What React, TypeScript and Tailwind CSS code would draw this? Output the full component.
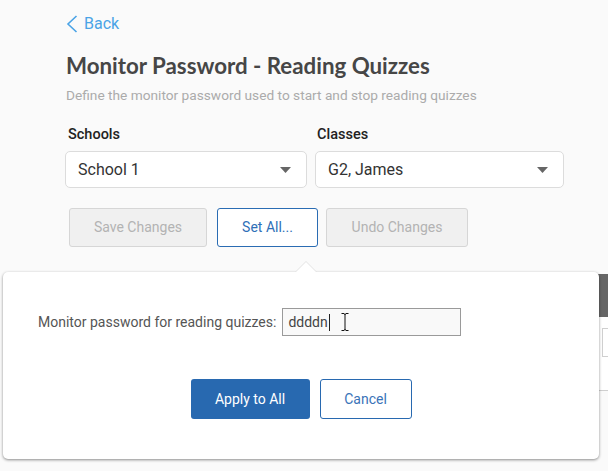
function BackChevron() {
  return (
    <svg width="12" height="18" viewBox="0 0 12 18" className="shrink-0">
      <path d="M10.5 1 L2 9 L10.5 17" stroke="#4aa3e6" strokeWidth="1.6" fill="none" />
    </svg>
  )
}

function Caret() {
  return (
    <svg width="11" height="6" viewBox="0 0 11 6" className="shrink-0">
      <path d="M0 0 L11 0 L5.5 6 Z" fill="#666" />
    </svg>
  )
}

function Select({ value, className }: { value: string; className: string }) {
  return (
    <div
      className={`flex h-[37px] items-center justify-between rounded-[5px] border border-[#dcdcdc] bg-white pl-[12px] pr-[15px] text-[16px] text-[#333] ${className}`}
    >
      <span>{value}</span>
      <Caret />
    </div>
  )
}

function IBeam() {
  return (
    <svg width="8" height="18" viewBox="0 0 8 18" className="absolute left-[58px] top-[4px]">
      <path d="M0.5 0.5 H3 M5 0.5 H7.5 M3 0.5 Q4 1 4 2 V16 Q4 17 3 17.5 M5 0.5 Q4 1 4 2 M4 16 Q4 17 5 17.5 M0.5 17.5 H3 M5 17.5 H7.5" stroke="#111" strokeWidth="1" fill="none" />
    </svg>
  )
}

export default function App() {
  return (
    <div className="relative h-[471px] w-[608px] overflow-hidden bg-[#fafafa] font-['Roboto',sans-serif]">
      <div className="pl-[66px] pt-[13px]">
        {/* Back link */}
        <div className="flex h-[22px] items-center gap-[6px] text-[16px] text-[#4aa3e6]">
          <BackChevron />
          <span>Back</span>
        </div>

        <h1 className="mt-[17px] font-['Lato',sans-serif] text-[22.3px] font-bold leading-[28px] text-[#464646]">
          Monitor Password - Reading Quizzes
        </h1>
        <p className="mt-[6px] text-[13.7px] leading-[18px] text-[#ababab]">
          Define the monitor password used to start and stop reading quizzes
        </p>

        {/* Filters */}
        <div className="-ml-px mt-[22px] flex gap-[8px]">
          <div className="w-[242px]">
            <div className="pl-[3px] text-[14.5px] font-medium leading-[18px] text-[#222]">Schools</div>
            <Select value="School 1" className="mt-[7px] w-[242px]" />
          </div>
          <div className="w-[249px]">
            <div className="pl-[2px] text-[14.5px] font-medium leading-[18px] text-[#222]">Classes</div>
            <Select value="G2, James" className="mt-[7px] w-[249px]" />
          </div>
        </div>

        {/* Actions */}
        <div className="mt-[20px] flex pl-[3px] text-[14px]">
          <button className="h-[39px] w-[138px] rounded-[3px] border border-[#d6d6d6] bg-[#f0f0f0] text-[#b3b3b3]">
            Save Changes
          </button>
          <button className="ml-[10px] h-[39px] w-[101px] rounded-[3px] border border-[#2a6cb3] bg-white text-[#2f6fb7]">
            Set All...
          </button>
          <button className="ml-[8px] h-[39px] w-[142px] rounded-[3px] border border-[#d6d6d6] bg-[#f0f0f0] text-[#b3b3b3]">
            Undo Changes
          </button>
        </div>

        {/* Table underneath the popover */}
        <div className="mt-[27px] w-[600px]">
          <div className="h-[43px] bg-[#666]" />
          <div className="h-[74px] border-b border-[#cfcfcf] bg-white pt-[11px] pl-[536px]">
            <div className="h-[29px] w-[60px] border border-[#cfcfcf] bg-white" />
          </div>
        </div>
      </div>

      {/* Popover */}
      <div className="absolute left-[3px] top-[272px] h-[187px] w-[596px] rounded-[5px] bg-white shadow-[0_1px_3px_rgba(0,0,0,0.45)]">
        <div className="absolute -top-[11px] left-[292px] h-0 w-0 border-x-[11px] border-b-[11px] border-x-transparent border-b-[#e2e2e2]" />
        <div className="absolute -top-[10px] left-[293px] h-0 w-0 border-x-[10px] border-b-[10px] border-x-transparent border-b-white" />

        <div className="flex items-center pl-[35px] pt-[36px]">
          <span className="text-[14px] text-[#555]">Monitor password for reading quizzes:</span>
          <div className="relative ml-[6px] flex h-[28px] w-[179px] items-center border border-[#9a9a9a] bg-[#f9f9f9] pl-[5px] text-[14px] text-[#444]">
            <span>ddddn</span>
            <span className="ml-[1px] h-[17px] w-px bg-[#222]" />
            <IBeam />
          </div>
        </div>

        <div className="mt-[43px] flex justify-center gap-[10px] text-[14px]">
          <button className="h-[40px] w-[119px] rounded-[3px] bg-[#2869b0] text-white">Apply to All</button>
          <button className="h-[40px] w-[92px] rounded-[3px] border border-[#2869b0] bg-white text-[#3a73b8]">
            Cancel
          </button>
        </div>
      </div>
    </div>
  )
}
